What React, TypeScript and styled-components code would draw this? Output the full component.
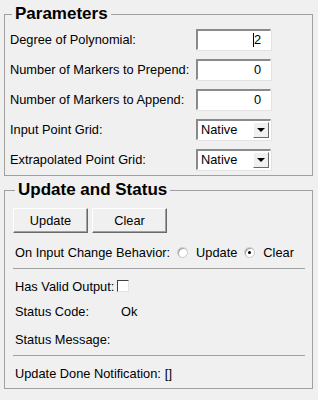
import styled, { createGlobalStyle } from "styled-components";

const GlobalStyle = createGlobalStyle`
  html, body {
    margin: 0;
    padding: 0;
    background: #f0f0f0;
  }
  body {
    font-family: "Liberation Sans", Arial, sans-serif;
    font-size: 12.8px;
    color: #000;
  }
`;

const parameters = [
  { label: "Degree of Polynomial:", kind: "text", value: "2", caret: true },
  { label: "Number of Markers to Prepend:", kind: "text", value: "0" },
  { label: "Number of Markers to Append:", kind: "text", value: "0" },
  { label: "Input Point Grid:", kind: "select", value: "Native" },
  { label: "Extrapolated Point Grid:", kind: "select", value: "Native" },
];

const App = () => {
  return (
    <Page>
      <GlobalStyle />
      <Group>
        <Legend>Parameters</Legend>
        <ParamGrid>
          {parameters.map((p) => (
            <ParamRow key={p.label}>
              <Label>{p.label}</Label>
              {p.kind === "text" ? (
                <TextBox>
                  {p.caret && <Caret />}
                  {p.value}
                </TextBox>
              ) : (
                <Combo>
                  <ComboValue>{p.value}</ComboValue>
                  <ComboButton>
                    <Arrow />
                  </ComboButton>
                </Combo>
              )}
            </ParamRow>
          ))}
        </ParamGrid>
      </Group>

      <Group $status>
        <Legend>Update and Status</Legend>
        <ButtonRow>
          <Button>Update</Button>
          <Button>Clear</Button>
        </ButtonRow>
        <Line $top={9}>
          <Text>On Input Change Behavior:</Text>
          <RadioOption>
            <Radio />
            Update
          </RadioOption>
          <RadioOption>
            <Radio $checked />
            Clear
          </RadioOption>
        </Line>
        <Separator $top={6} />
        <Line $top={7}>
          <Text>Has Valid Output:</Text>
          <Check />
        </Line>
        <Line $top={5}>
          <Key>Status Code:</Key>
          <Text>Ok</Text>
        </Line>
        <Line $top={8}>
          <Key>Status Message:</Key>
        </Line>
        <Separator $top={6} />
        <Line $top={7}>
          <Text>Update Done Notification:</Text>
          <Value>[]</Value>
        </Line>
      </Group>
    </Page>
  );
};

const Page = styled.div`
  width: 318px;
  padding: 4px 0 0 4px;
  box-sizing: border-box;
  display: flex;
  flex-direction: column;
  gap: 4px;
`;

const Group = styled.fieldset<{ $status?: boolean }>`
  margin: 0;
  width: 309px;
  box-sizing: border-box;
  border: 1px solid #a0a0a0;
  padding: ${({ $status }) => ($status ? "8px 7px 5px 8px" : "5px 5px 5px 5px")};
  display: flex;
  flex-direction: column;
`;

const Legend = styled.legend`
  margin-left: 2px;
  padding: 0 3px;
  font-family: "Liberation Sans", Arial, sans-serif;
  font-weight: bold;
  font-size: 17px;
  line-height: 20px;
  color: #000;
`;

const ParamGrid = styled.div`
  display: flex;
  flex-direction: column;
  gap: 9px;
`;

const ParamRow = styled.div`
  display: grid;
  grid-template-columns: 186px 75px;
  height: 21px;
  align-items: center;
`;

const Label = styled.span`
  white-space: nowrap;
`;

const TextBox = styled.div`
  height: 21px;
  box-sizing: border-box;
  background: #fff;
  border-top: 2px solid #8a8a8a;
  border-left: 2px solid #8a8a8a;
  border-right: 1px solid #fff;
  border-bottom: 1px solid #fff;
  box-shadow: 1px 1px 0 #e3e3e3;
  display: flex;
  align-items: center;
  justify-content: flex-end;
  padding-right: 9px;
  line-height: 1;
`;

const Caret = styled.span`
  display: inline-block;
  width: 1px;
  height: 14px;
  background: #000;
`;

const Combo = styled(TextBox)`
  justify-content: space-between;
  padding: 0 1px 0 3px;
`;

const ComboValue = styled.span`
  color: #000;
`;

const ComboButton = styled.div`
  width: 16px;
  height: 16px;
  box-sizing: border-box;
  background: #f0f0f0;
  border-top: 1px solid #fff;
  border-left: 1px solid #fff;
  border-right: 1px solid #696969;
  border-bottom: 1px solid #696969;
  display: flex;
  align-items: center;
  justify-content: center;
`;

const Arrow = styled.span`
  width: 0;
  height: 0;
  border-left: 4px solid transparent;
  border-right: 4px solid transparent;
  border-top: 4px solid #000;
`;

const ButtonRow = styled.div`
  display: flex;
  gap: 4px;
`;

const Button = styled.div`
  width: 75px;
  height: 25px;
  box-sizing: border-box;
  background: #f0f0f0;
  border-top: 1px solid #fff;
  border-left: 1px solid #fff;
  border-right: 1px solid #696969;
  border-bottom: 1px solid #696969;
  box-shadow: inset -1px -1px 0 #a0a0a0;
  display: flex;
  align-items: center;
  justify-content: center;
`;

const Line = styled.div<{ $top: number }>`
  margin-top: ${({ $top }) => $top}px;
  height: 20px;
  padding-left: 2px;
  display: flex;
  align-items: center;
  white-space: nowrap;
`;

const Text = styled.span``;

const Value = styled.span`
  margin-left: 4px;
`;

const Key = styled.span`
  width: 106px;
`;

const RadioOption = styled.span`
  display: flex;
  align-items: center;
  margin-left: 7px;
  gap: 8px;
`;

const Radio = styled.span<{ $checked?: boolean }>`
  width: 11px;
  height: 11px;
  box-sizing: border-box;
  border-radius: 50%;
  background: #fff;
  border: 1px solid #c8c8c8;
  box-shadow: inset 1px 1px 0 #a0a0a0;
  display: flex;
  align-items: center;
  justify-content: center;
  &::after {
    content: "";
    width: 3px;
    height: 3px;
    border-radius: 50%;
    background: ${({ $checked }) => ($checked ? "#000" : "transparent")};
  }
`;

const Check = styled.span`
  margin-left: 3px;
  width: 12px;
  height: 12px;
  box-sizing: border-box;
  background: #fff;
  border-top: 1px solid #404040;
  border-left: 1px solid #404040;
  border-right: 1px solid #e3e3e3;
  border-bottom: 1px solid #e3e3e3;
`;

const Separator = styled.div<{ $top: number }>`
  margin-top: ${({ $top }) => $top}px;
  height: 1px;
  background: #a0a0a0;
  width: 292px;
`;

export default App;
